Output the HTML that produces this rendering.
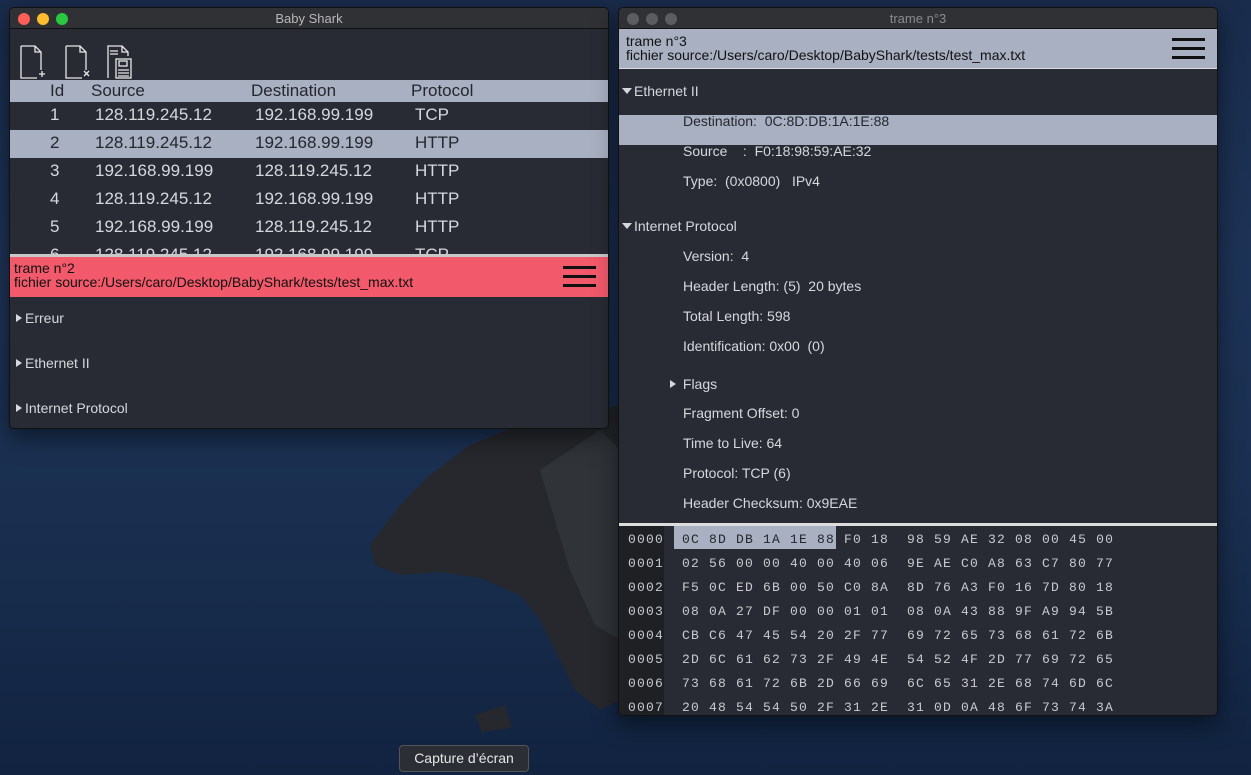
<!DOCTYPE html>
<html><head><meta charset="utf-8"><style>
*{margin:0;padding:0;box-sizing:border-box}
body{width:1251px;height:775px;overflow:hidden;position:relative;font-family:"Liberation Sans",sans-serif;background:linear-gradient(180deg,#1a2c4c 0%,#1d3356 35%,#1a2f50 65%,#112340 100%)}
.abs{position:absolute}
.win{position:absolute;background:#282b33;border:1px solid #111;border-radius:5px;overflow:hidden;box-shadow:0 8px 24px rgba(0,0,0,.5)}
.tb{position:absolute;left:0;right:0;top:0;height:21px;background:#303135;border-bottom:1px solid #111;color:#b8b8b8;font-size:13px;text-align:center;line-height:21px}
.dot{position:absolute;top:5px;width:12px;height:12px;border-radius:50%}
.t{position:absolute;white-space:pre;color:#d6d8de}
.hex{position:absolute;left:63px;font-family:"Liberation Mono",monospace;font-size:13px;letter-spacing:1.2px;color:#c8cad0;white-space:pre}
.off{position:absolute;left:9px;font-family:"Liberation Mono",monospace;font-size:13px;letter-spacing:1.2px;color:#c8cad0}
.ham{position:absolute;width:33px;height:21px}
.ham i{position:absolute;left:0;right:0;height:3px;background:#111}
.tri{display:inline-block;width:0;height:0;margin-right:3px;vertical-align:1px}
.tr{border-left:6px solid #d6d8de;border-top:4.5px solid transparent;border-bottom:4.5px solid transparent}
.td{border-top:6px solid #d6d8de;border-left:5px solid transparent;border-right:5px solid transparent;margin-right:2px;vertical-align:2px}
</style></head><body>
<svg class="abs" style="left:0;top:0" width="1251" height="775">
<path d="M370 545 L400 505 L430 475 L470 445 L520 425 L620 405 L620 700 L600 710 L575 690 L560 660 L540 620 L520 595 L480 578 L440 572 L400 575 L375 565 Z" fill="#26282d"/>
<path d="M540 470 L600 430 L620 450 L620 640 L595 625 L570 570 Z" fill="#3a3f46" opacity=".5"/>
<path d="M475 715 L505 705 L512 728 L482 732 Z" fill="#26282d"/>
</svg>

<!-- Window 1 -->
<div class="win" style="left:9px;top:7px;width:600px;height:422px">
 <div class="tb">Baby Shark</div>
 <div class="dot" style="left:8px;background:#fe5f57"></div>
 <div class="dot" style="left:27px;background:#febc2e"></div>
 <div class="dot" style="left:46px;background:#28c840"></div>
 <svg class="abs" style="left:10px;top:30px" width="120" height="42" fill="none" stroke="#e8e8e8" stroke-width="1.3">
  <path d="M1 8V40H17M1 8H15L21 14V32M15 8V14H21"/><path d="M22 33v6M19 36h6"/>
  <path d="M46 8V40H62M46 8H60L66 14V32M60 8V14H66"/><path d="M64 33l5 5M69 33l-5 5"/>
  <path d="M88 40V8H102L108 14V18M102 8V14H108M90 13h8M90 16h8"/><rect x="96" y="21" width="15" height="19"/><rect x="99" y="23" width="8" height="5"/><path d="M98 32h11M98 35h11M98 38h11"/>
 </svg>
 <div class="abs" style="left:0;top:72px;width:600px;height:22px;background:#a9b0c1"></div>
 <div class="t" style="left:40px;top:72px;font-size:17px;color:#24272e;line-height:22px">Id</div>
 <div class="t" style="left:81px;top:72px;font-size:17px;color:#24272e;line-height:22px">Source</div>
 <div class="t" style="left:241px;top:72px;font-size:17px;color:#24272e;line-height:22px">Destination</div>
 <div class="t" style="left:401px;top:72px;font-size:17px;color:#24272e;line-height:22px">Protocol</div>
 <div class="abs" style="left:0;top:122px;width:600px;height:28px;background:#a9b0c1"></div>
 <div class="abs" style="left:0;top:93px;width:600px;height:153px;font-size:17px;line-height:28px;overflow:hidden">
  <div class="t" style="left:40px;top:0">1</div><div class="t" style="left:85px;top:0">128.119.245.12</div><div class="t" style="left:245px;top:0">192.168.99.199</div><div class="t" style="left:405px;top:0">TCP</div>
  <div class="t" style="left:40px;top:28px;color:#24272e">2</div><div class="t" style="left:85px;top:28px;color:#24272e">128.119.245.12</div><div class="t" style="left:245px;top:28px;color:#24272e">192.168.99.199</div><div class="t" style="left:405px;top:28px;color:#24272e">HTTP</div>
  <div class="t" style="left:40px;top:56px">3</div><div class="t" style="left:85px;top:56px">192.168.99.199</div><div class="t" style="left:245px;top:56px">128.119.245.12</div><div class="t" style="left:405px;top:56px">HTTP</div>
  <div class="t" style="left:40px;top:84px">4</div><div class="t" style="left:85px;top:84px">128.119.245.12</div><div class="t" style="left:245px;top:84px">192.168.99.199</div><div class="t" style="left:405px;top:84px">HTTP</div>
  <div class="t" style="left:40px;top:112px">5</div><div class="t" style="left:85px;top:112px">192.168.99.199</div><div class="t" style="left:245px;top:112px">128.119.245.12</div><div class="t" style="left:405px;top:112px">HTTP</div>
  <div class="t" style="left:40px;top:140px">6</div><div class="t" style="left:85px;top:140px">128.119.245.12</div><div class="t" style="left:245px;top:140px">192.168.99.199</div><div class="t" style="left:405px;top:140px">TCP</div>
 </div>
 <div class="abs" style="left:0;top:246px;width:600px;height:3px;background:#c8c8c8"></div>
 <div class="abs" style="left:0;top:249px;width:600px;height:40px;background:#f2596a"></div>
 <div class="t" style="left:4px;top:253px;font-size:14px;color:#111;line-height:14px">trame n°2
fichier source:/Users/caro/Desktop/BabyShark/tests/test_max.txt</div>
 <div class="ham" style="left:553px;top:258px"><i style="top:0"></i><i style="top:9px"></i><i style="top:18px"></i></div>
 <div class="t" style="left:6px;top:302px;font-size:14px"><span class="tri tr"></span>Erreur</div>
 <div class="t" style="left:6px;top:347px;font-size:14px"><span class="tri tr"></span>Ethernet II</div>
 <div class="t" style="left:6px;top:392px;font-size:14px"><span class="tri tr"></span>Internet Protocol</div>
</div>

<!-- Window 2 -->
<div class="win" style="left:618px;top:7px;width:600px;height:709px">
 <div class="tb" style="color:#8a8b8e">trame n°3</div>
 <div class="dot" style="left:8px;background:#5c5d60"></div>
 <div class="dot" style="left:27px;background:#5c5d60"></div>
 <div class="dot" style="left:46px;background:#5c5d60"></div>
 <div class="abs" style="left:0;top:21px;width:600px;height:40px;background:#a9b0c1;border-bottom:1px solid #ddd"></div>
 <div class="t" style="left:7px;top:26px;font-size:14px;color:#111;line-height:14px">trame n°3
fichier source:/Users/caro/Desktop/BabyShark/tests/test_max.txt</div>
 <div class="ham" style="left:553px;top:30px"><i style="top:0"></i><i style="top:9px"></i><i style="top:18px"></i></div>
 <div class="abs" style="left:0;top:107px;width:600px;height:30px;background:#a9b0c1"></div>
 <div class="abs" style="left:0;top:0;font-size:14px">
  <div class="t" style="left:3px;top:75px"><span class="tri td"></span>Ethernet II</div>
  <div class="t" style="left:64px;top:105px;color:#24272e">Destination:  0C:8D:DB:1A:1E:88</div>
  <div class="t" style="left:64px;top:135px">Source    :  F0:18:98:59:AE:32</div>
  <div class="t" style="left:64px;top:165px">Type:  (0x0800)   IPv4</div>
  <div class="t" style="left:3px;top:210px"><span class="tri td"></span>Internet Protocol</div>
  <div class="t" style="left:64px;top:240px">Version:  4</div>
  <div class="t" style="left:64px;top:270px">Header Length: (5)  20 bytes</div>
  <div class="t" style="left:64px;top:300px">Total Length: 598</div>
  <div class="t" style="left:64px;top:330px">Identification: 0x00  (0)</div>
  <div class="t" style="left:51px;top:368px"><span class="tri tr"></span> Flags</div>
  <div class="t" style="left:64px;top:397px">Fragment Offset: 0</div>
  <div class="t" style="left:64px;top:427px">Time to Live: 64</div>
  <div class="t" style="left:64px;top:457px">Protocol: TCP (6)</div>
  <div class="t" style="left:64px;top:487px">Header Checksum: 0x9EAE</div>
 </div>
 <div class="abs" style="left:0;top:515px;width:600px;height:3px;background:#ddd"></div>
 <div class="abs" style="left:0;top:518px;width:45px;height:191px;background:#1f2024"></div>
 <div class="abs" style="left:55px;top:518px;width:162px;height:23px;background:#a9b0c1"></div>
 <div class="abs" style="left:0;top:520px;line-height:24px">
  <div class="off" style="top:0">0000</div><div class="off" style="top:24px">0001</div><div class="off" style="top:48px">0002</div><div class="off" style="top:72px">0003</div><div class="off" style="top:96px">0004</div><div class="off" style="top:120px">0005</div><div class="off" style="top:144px">0006</div><div class="off" style="top:168px">0007</div>
  <div class="hex" style="top:0"><span style="color:#24272e">0C 8D DB 1A 1E 88</span> F0 18  98 59 AE 32 08 00 45 00</div>
  <div class="hex" style="top:24px">02 56 00 00 40 00 40 06  9E AE C0 A8 63 C7 80 77</div>
  <div class="hex" style="top:48px">F5 0C ED 6B 00 50 C0 8A  8D 76 A3 F0 16 7D 80 18</div>
  <div class="hex" style="top:72px">08 0A 27 DF 00 00 01 01  08 0A 43 88 9F A9 94 5B</div>
  <div class="hex" style="top:96px">CB C6 47 45 54 20 2F 77  69 72 65 73 68 61 72 6B</div>
  <div class="hex" style="top:120px">2D 6C 61 62 73 2F 49 4E  54 52 4F 2D 77 69 72 65</div>
  <div class="hex" style="top:144px">73 68 61 72 6B 2D 66 69  6C 65 31 2E 68 74 6D 6C</div>
  <div class="hex" style="top:168px">20 48 54 54 50 2F 31 2E  31 0D 0A 48 6F 73 74 3A</div>
 </div>
</div>

<div class="abs" style="left:399px;top:745px;width:130px;height:27px;background:#2b2e35;border:1px solid #555;border-radius:4px;color:#e6e6e6;font-size:14px;text-align:center;line-height:25px">Capture d’écran</div>
</body></html>
